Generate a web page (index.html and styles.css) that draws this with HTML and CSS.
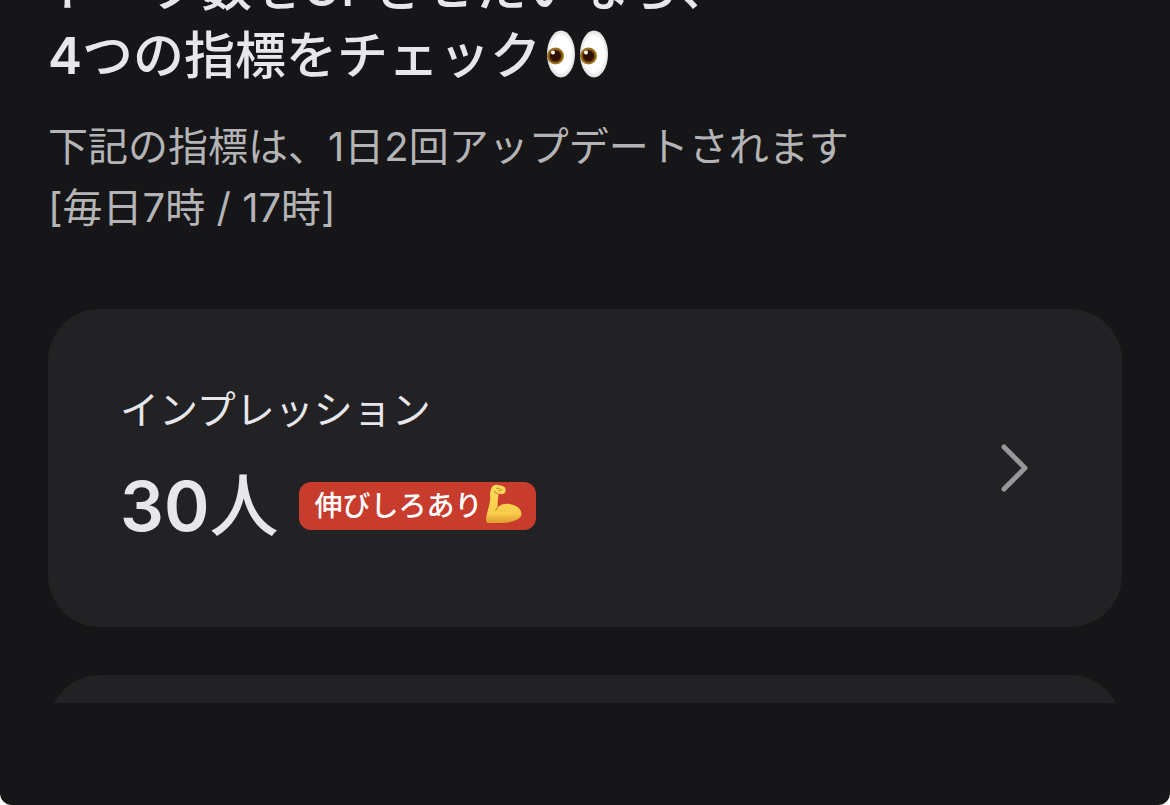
FILE: index.html
```
<!DOCTYPE html>
<html lang="ja">
<head>
<meta charset="utf-8">
<meta name="viewport" content="width=device-width, initial-scale=1">
<title>指標</title>
<link rel="stylesheet" href="styles.css">
</head>
<body>
<div class="screen">
  <main class="content">
    <h1 class="title">トーク数をUPさせたいなら、<br><span class="figure">4</span>つの指標をチェック<svg class="eyes" viewBox="0 0 64 52" role="img" aria-label="目">
      <defs>
        <radialGradient id="white"><stop offset="0.75" stop-color="#fff"/><stop offset="1" stop-color="#dcdcdf"/></radialGradient>
        <radialGradient id="iris"><stop offset="0.5" stop-color="#2b1002"/><stop offset="0.64" stop-color="#4a2504"/><stop offset="0.8" stop-color="#93681a"/><stop offset="1" stop-color="#a8802c"/></radialGradient>
      </defs>
      <g id="eye">
        <ellipse cx="15" cy="26" rx="14" ry="23.500" fill="url(#white)"/>
        <circle cx="9.500" cy="28" r="8.500" fill="url(#iris)"/>
        <circle cx="7" cy="24.500" r="2" fill="#fff"/>
      </g>
      <use href="#eye" x="33"/>
    </svg></h1>
    <p class="note">下記の指標は、1日2回アップデートされます<br>[毎日7時 / 17時]</p>
    <div class="cards">
      <a class="card" href="#impression">
        <span class="metric">
          <span class="label">インプレッション</span>
          <span class="result">
            <span class="value"><span class="figure">30</span>人</span>
            <span class="badge">伸びしろあり<svg class="arm" viewBox="0 0 38 40" role="img" aria-label="力こぶ">
              <defs>
                <linearGradient id="skin" x1="0" y1="0" x2="0" y2="1"><stop offset="0" stop-color="#ffdc5c"/><stop offset="0.75" stop-color="#f9cc4b"/><stop offset="1" stop-color="#dc9d2c"/></linearGradient>
              </defs>
              <path d="M7 5C8 2 11 1 14 2L18 3C21 4 21 7 20 9C19 11 16 11 14 10C13 14 13 18 13 23C17 19 23 19 28 21C34 23 37 28 35 32C32 36 25 38 17 38L4 38C2 38 2 36 2 33C3 27 6 19 6 13C5 10 6 8 7 5Z" fill="url(#skin)"/>
              <path d="M12 5L15 5M14 7Q16 8 17 6M13 10Q11 10 10 8" fill="none" stroke="#c98b25" stroke-width="1" stroke-linecap="round"/>
              <path d="M13 23Q12 25 11 26" fill="none" stroke="#c98b25" stroke-width="1" stroke-linecap="round"/>
            </svg></span>
          </span>
        </span>
        <svg class="chevron" viewBox="0 0 30 50" aria-hidden="true"><path d="M4 4L25 25L4 46" fill="none" stroke="#98989a" stroke-width="5" stroke-linecap="round" stroke-linejoin="round"/></svg>
      </a>
      <div class="card"></div>
    </div>
  </main>
  <footer class="bottom"></footer>
</div>
</body>
</html>
```
FILE: styles.css
```
* { box-sizing: border-box; }
html { background: #fff; }
body {
  margin: 0;
  font-family: Inter, "Noto Sans CJK JP", sans-serif;
  color: #e6e6eb;
}
.screen {
  display: flex;
  flex-direction: column;
  height: 100vh;
  overflow: hidden;
  background: #161618;
  border-radius: 0 0 12px 12px;
}
.content {
  flex: 1;
  min-height: 0;
  overflow: hidden;
  padding: 0 48px;
}
.bottom { flex: 0 0 102px; }
.figure { font-weight: 600; }
.title {
  margin: -46px 0 0;
  font-size: 51px;
  line-height: 68px;
  font-weight: 500;
}
.eyes {
  width: 64px;
  height: 52px;
  margin-left: 5px;
  vertical-align: -6px;
}
.note {
  margin: 26px 0 0;
  font-size: 40px;
  line-height: 61px;
  font-weight: 400;
  color: #b4b4b6;
}
.cards {
  display: grid;
  gap: 48px;
  margin-top: 71px;
}
.card {
  display: flex;
  align-items: center;
  justify-content: space-between;
  min-height: 318px;
  padding: 70px 92px 70px 72px;
  border-radius: 52px;
  background: #222224;
  color: inherit;
  text-decoration: none;
}
.metric {
  display: grid;
  gap: 16px;
}
.label {
  font-size: 39px;
  line-height: 60px;
}
.result {
  display: flex;
  align-items: center;
  gap: 21px;
}
.value {
  font-size: 69px;
  line-height: 100px;
  font-weight: 500;
}
.badge {
  display: flex;
  align-items: center;
  height: 48px;
  padding: 0 12px 4px 15px;
  border-radius: 12px;
  background: #c83c2d;
  color: #fff;
  font-size: 28px;
  font-weight: 500;
}
.arm {
  width: 40px;
  height: 42px;
  margin-left: 2px;
}
.chevron {
  width: 30px;
  height: 50px;
}
```
